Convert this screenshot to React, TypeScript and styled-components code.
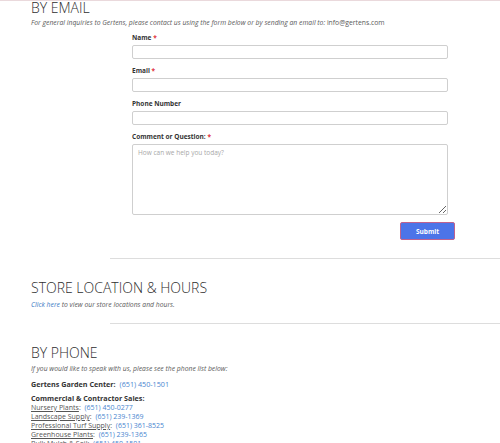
import * as React from 'react';
import styled, { createGlobalStyle } from 'styled-components';

const GlobalStyle = createGlobalStyle`
  html, body {
    margin: 0;
    padding: 0;
    background: #ffffff;
  }
  body {
    font-family: 'Open Sans', 'Liberation Sans', sans-serif;
    color: #333333;
    overflow: hidden;
  }
`;

const Page = styled.div`
  width: 500px;
  height: 443px;
  overflow: hidden;
  border-top: 1px solid #ead9dc;
  box-sizing: border-box;
`;

const Section = styled.section<{ $shift?: number }>`
  padding-left: 31px;
  margin-top: ${({ $shift }) => $shift || 0}px;
`;

const Heading = styled.h2`
  margin: 0;
  font-size: 14px;
  font-weight: 300;
  line-height: 16px;
  color: #2e2e2e;
`;

const Intro = styled.p<{ $gap?: number }>`
  margin: ${({ $gap }) => $gap || 0}px 0 0;
  font-size: 6.8px;
  font-style: italic;
  line-height: 10px;
  color: #5a5a5a;
`;

const Email = styled.span`
  font-style: normal;
`;

const Form = styled.form`
  margin: 6px 0 0 132px;
  width: 323px;
  display: flex;
  flex-direction: column;
`;

const Field = styled.div`
  display: flex;
  flex-direction: column;
  width: 316px;
`;

const Label = styled.label`
  font-size: 6.5px;
  font-weight: 700;
  line-height: 8px;
  color: #333333;
  margin-bottom: 3px;
`;

const Req = styled.span`
  color: #e0303a;
`;

const Input = styled.input`
  box-sizing: border-box;
  height: 14px;
  border: 1px solid #cfcfcf;
  border-radius: 2px;
  margin: 0 0 8px;
  padding: 0 4px;
  font-family: inherit;
  font-size: 7px;
`;

const TextArea = styled.textarea`
  box-sizing: border-box;
  height: 71px;
  border: 1px solid #cfcfcf;
  border-radius: 2px;
  margin: 0;
  padding: 3px 5px;
  font-family: inherit;
  font-size: 6.5px;
  resize: vertical;

  &::placeholder {
    color: #a8a8a8;
  }
`;

const SubmitRow = styled.div`
  display: flex;
  justify-content: flex-end;
  margin-top: 7px;
`;

const Submit = styled.button`
  width: 55px;
  height: 18px;
  box-sizing: border-box;
  background: #4c74e8;
  border: 1px solid #c0628e;
  border-radius: 2px;
  color: #ffffff;
  font-family: inherit;
  font-size: 6.5px;
  font-weight: 700;
  padding: 0;
`;

const Divider = styled.hr<{ $top: number; $bottom: number }>`
  margin: ${({ $top }) => $top}px 0 ${({ $bottom }) => $bottom}px 110px;
  border: 0;
  border-top: 1px solid #dddddd;
`;

const Link = styled.a`
  color: #3b78c4;
  text-decoration: none;
`;

const Line = styled.p<{ $gap?: number }>`
  margin: ${({ $gap }) => $gap || 0}px 0 0;
  font-size: 7.2px;
  line-height: 10px;
  font-weight: 700;
  color: #333333;
`;

const Phone = styled.a`
  color: #4a86cf;
  font-weight: 400;
  text-decoration: none;
  margin-left: 2px;
`;

const List = styled.ul`
  list-style: none;
  margin: 0;
  padding: 0;
`;

const Item = styled.li`
  font-size: 7px;
  line-height: 9px;
  color: #555555;
`;

const Dept = styled.span`
  text-decoration: underline;
`;

const contacts = [
  { name: 'Nursery Plants', phone: '(651) 450-0277' },
  { name: 'Landscape Supply', phone: '(651) 239-1369' },
  { name: 'Professional Turf Supply', phone: '(651) 361-8525' },
  { name: 'Greenhouse Plants', phone: '(651) 239-1365' },
  { name: 'Bulk Mulch & Soil', phone: '(651) 450-1501' },
];

export default function App() {
  return (
    <Page>
      <GlobalStyle />
      <Section $shift={-1}>
        <Heading>BY EMAIL</Heading>
        <Intro $gap={2}>
          For general inquiries to Gertens, please contact us using the form below or by sending an email to: <Email>info@gertens.com</Email>
        </Intro>
      </Section>
      <Form onSubmit={(e) => e.preventDefault()}>
        <Field>
          <Label>Name <Req>*</Req></Label>
          <Input type='text' />
        </Field>
        <Field>
          <Label>Email <Req>*</Req></Label>
          <Input type='email' />
        </Field>
        <Field>
          <Label>Phone Number</Label>
          <Input type='tel' />
        </Field>
        <Field>
          <Label>Comment or Question: <Req>*</Req></Label>
          <TextArea placeholder='How can we help you today?' />
        </Field>
        <SubmitRow>
          <Submit type='submit'>Submit</Submit>
        </SubmitRow>
      </Form>
      <Divider $top={18} $bottom={21} />
      <Section>
        <Heading>STORE LOCATION &amp; HOURS</Heading>
        <Intro $gap={4}>
          <Link href='#'>Click here</Link> to view our store locations and hours.
        </Intro>
      </Section>
      <Divider $top={13} $bottom={21} />
      <Section>
        <Heading>BY PHONE</Heading>
        <Intro $gap={3}>
          If you would like to speak with us, please see the phone list below:
        </Intro>
        <Line $gap={5}>
          Gertens Garden Center: <Phone href='#'>(651) 450-1501</Phone>
        </Line>
        <Line $gap={4}>Commercial &amp; Contractor Sales:</Line>
        <List>
          {contacts.map((c) => (
            <Item key={c.name}>
              <Dept>{c.name}</Dept>: <Phone href='#'>{c.phone}</Phone>
            </Item>
          ))}
        </List>
      </Section>
    </Page>
  );
}
